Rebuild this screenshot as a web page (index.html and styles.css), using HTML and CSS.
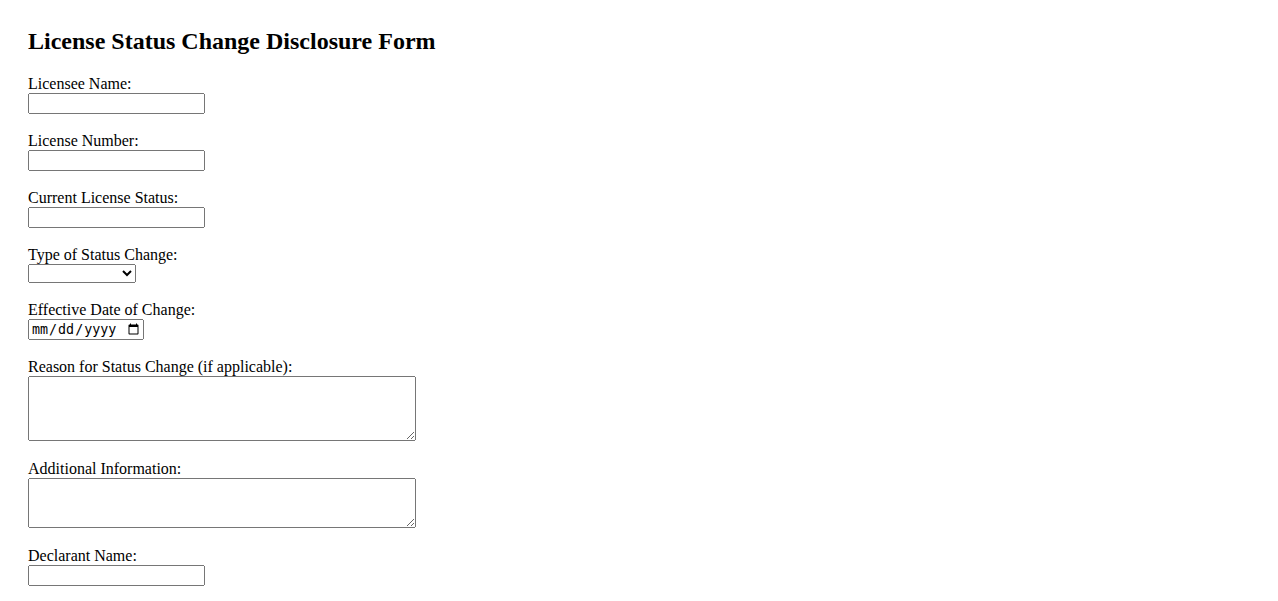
FILE: index.html
```html
<!DOCTYPE html>
<html lang="en">
<head>
    <meta charset="UTF-8">
    <meta name="viewport" content="width=device-width, initial-scale=1.0">
    <title>License Status Change Disclosure Form</title>
    <link rel="stylesheet" href="styles.css">
</head>
<body>
    <h2>License Status Change Disclosure Form</h2>
    <form>
        <div class="form-group">
            <label for="licenseeName">Licensee Name:</label>
            <input type="text" id="licenseeName" name="licenseeName">
        </div>
        <div class="form-group">
            <label for="licenseNumber">License Number:</label>
            <input type="text" id="licenseNumber" name="licenseNumber">
        </div>
        <div class="form-group">
            <label for="currentStatus">Current License Status:</label>
            <input type="text" id="currentStatus" name="currentStatus">
        </div>
        <div class="form-group">
            <label for="changeType">Type of Status Change:</label>
            <select id="changeType" name="changeType">
                <option value=""></option>
                <option value="suspension">Suspension</option>
                <option value="revocation">Revocation</option>
                <option value="reinstatement">Reinstatement</option>
                <option value="expiration">Expiration</option>
            </select>
        </div>
        <div class="form-group">
            <label for="effectiveDate">Effective Date of Change:</label>
            <input type="date" id="effectiveDate" name="effectiveDate">
        </div>
        <div class="form-group">
            <label for="reason">Reason for Status Change (if applicable):</label>
            <textarea id="reason" name="reason" class="alto" rows="4" cols="50"></textarea>
        </div>
        <div class="form-group">
            <label for="additionalInfo">Additional Information:</label>
            <textarea id="additionalInfo" name="additionalInfo" class="bajo" rows="3" cols="50"></textarea>
        </div>
        <div class="form-group">
            <label for="declarantName">Declarant Name:</label>
            <input type="text" id="declarantName" name="declarantName">
        </div>
    </form>
</body>
</html>
```

FILE: styles.css
```css
body {
    margin: 0;
    padding: 28px;
    font-family: "Liberation Serif", "Times New Roman", serif;
    font-size: 16px;
    color: #000;
    background-color: #fff;
}
h2 {
    margin: 0 0 20px;
    font-size: 24px;
}
.form-group {
    margin-bottom: 15px;
}
.form-group label {
    display: block;
}
input,
select {
    margin-bottom: 3px;
}
input[type="text"] {
    box-sizing: border-box;
    width: 177px;
    height: 21px;
}
input[type="date"] {
    box-sizing: border-box;
    width: 116px;
    height: 21px;
}
select {
    box-sizing: border-box;
    width: 108px;
    height: 19px;
}
textarea {
    box-sizing: border-box;
    width: 388px;
}
textarea.alto {
    height: 65px;
}
textarea.bajo {
    height: 50px;
}
```
